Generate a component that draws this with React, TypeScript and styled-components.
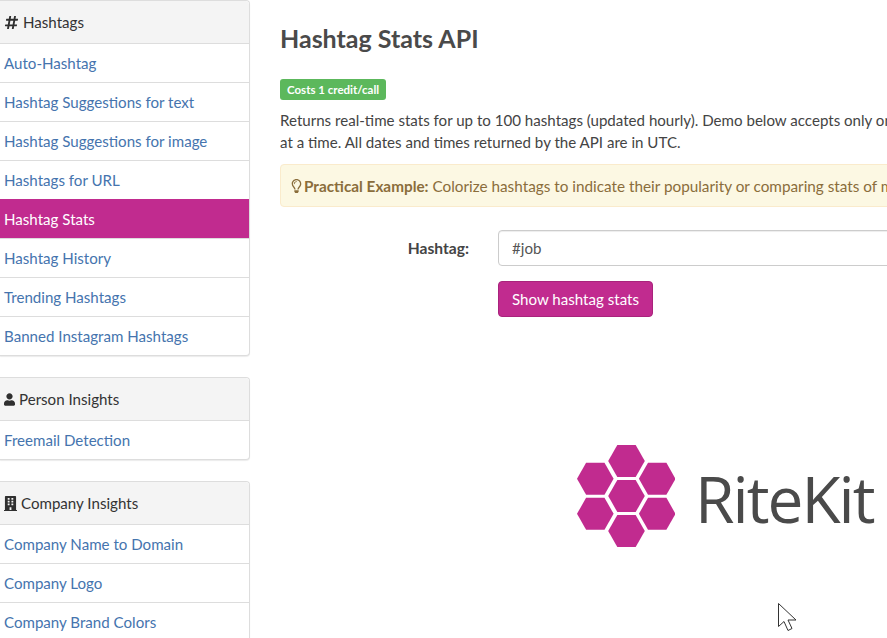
import React from 'react';
import styled, { createGlobalStyle } from 'styled-components';
import { FaHashtag, FaUser, FaBuilding, FaRegLightbulb } from 'react-icons/fa';

const brand = '#c12b8f';

const GlobalStyle = createGlobalStyle`
  html, body {
    margin: 0;
    padding: 0;
    background: #fff;
    overflow: hidden;
  }
  * { box-sizing: border-box; }
`;

const Page = styled.div`
  position: relative;
  display: flex;
  width: 887px;
  height: 638px;
  overflow: hidden;
  font-family: Lato, 'Open Sans', sans-serif;
  font-size: 15.1px;
  color: #444;
`;

const Sidebar = styled.aside`
  flex: none;
  width: 250px;
  display: flex;
  flex-direction: column;
  gap: 21px;
`;

const Panel = styled.section`
  flex: none;
  background: #fff;
  border: 1px solid #ddd;
  border-left: none;
  border-radius: 0 4px 4px 0;
  box-shadow: 0 1px 1px rgba(0, 0, 0, 0.08);
`;

const PanelHeader = styled.div`
  height: 42px;
  display: flex;
  align-items: center;
  gap: 4px;
  padding-left: 4px;
  background: #f4f4f4;
  border-radius: 0 4px 0 0;
  color: #333;
`;

const IconSlot = styled.span<{ $w: number }>`
  display: flex;
  width: ${({ $w }) => $w}px;
  color: #2f2f2f;
  svg { width: ${({ $w }) => $w}px; height: 15px; }
`;

const NavLink = styled.a<{ $active?: boolean }>`
  height: 39px;
  display: flex;
  align-items: center;
  padding-left: 4px;
  border-top: 1px solid ${({ $active }) => ($active ? brand : '#ddd')};
  background: ${({ $active }) => ($active ? brand : 'transparent')};
  color: ${({ $active }) => ($active ? '#fff' : '#4574ae')};
  text-decoration: none;
`;

const Main = styled.main`
  flex: none;
  width: 800px;
  padding: 23px 0 0 30px;
`;

const Title = styled.h1`
  margin: 0;
  font-size: 25px;
  line-height: 30px;
  font-weight: 700;
  color: #4a4a4a;
`;

const Badge = styled.span`
  display: inline-block;
  margin-top: 26px;
  height: 21px;
  padding: 0 7px;
  border-radius: 3px;
  background: #5cb85c;
  color: #fff;
  font-size: 11.5px;
  font-weight: 700;
  line-height: 21px;
`;

const Description = styled.p`
  margin: 9px 0 0;
  line-height: 22px;
  white-space: nowrap;
`;

const Alert = styled.div`
  margin-top: 11px;
  height: 43px;
  display: flex;
  align-items: center;
  gap: 2px;
  padding-left: 10px;
  background: #fcf8e3;
  border: 1px solid #faebcc;
  border-radius: 4px;
  color: #8a6d3b;
  font-size: 15.3px;
  white-space: nowrap;
  svg { width: 11px; height: 14px; }
`;

const FormRow = styled.div`
  margin-top: 23px;
  display: grid;
  grid-template-columns: 189px 1fr;
  column-gap: 29px;
  row-gap: 15px;
  align-items: center;
`;

const Label = styled.label`
  text-align: right;
  font-size: 15.6px;
  font-weight: 700;
  color: #444;
`;

const Input = styled.input`
  height: 36px;
  width: 100%;
  padding: 0 13px;
  border: 1px solid #ccc;
  border-radius: 4px;
  box-shadow: inset 0 1px 1px rgba(0, 0, 0, 0.075);
  font: inherit;
  color: #555;
  outline: none;
`;

const SubmitButton = styled.button`
  grid-column: 2;
  justify-self: start;
  height: 36px;
  width: 155px;
  padding: 0;
  background: ${brand};
  border: 1px solid #a9237c;
  border-radius: 4px;
  color: #fff;
  font: inherit;
`;

const Logo = styled.div`
  margin: 128px 0 0 297px;
  display: flex;
  align-items: flex-start;
  gap: 20px;
`;

const LogoText = styled.span`
  padding-top: 3px;
  font-family: 'Open Sans', sans-serif;
  font-size: 64px;
  font-weight: 500;
  line-height: 102px;
  color: #4a4a4a;
  letter-spacing: -2px;
`;

const Cursor = styled.svg`
  position: absolute;
  left: 777px;
  top: 602px;
`;

const hexCenters = [
  [49.5, 16],
  [18.3, 33.8],
  [80.2, 33.8],
  [49.5, 51],
  [18.3, 68.8],
  [80.2, 68.8],
  [49.5, 86],
];

const hexPoints = (cx: number, cy: number) =>
  [
    [cx - 18.3, cy],
    [cx - 9.2, cy - 16],
    [cx + 9.2, cy - 16],
    [cx + 18.3, cy],
    [cx + 9.2, cy + 16],
    [cx - 9.2, cy + 16],
  ]
    .map((p) => p.join(','))
    .join(' ');

const groups = [
  {
    title: 'Hashtags',
    icon: <FaHashtag />,
    iconWidth: 15,
    links: [
      'Auto-Hashtag',
      'Hashtag Suggestions for text',
      'Hashtag Suggestions for image',
      'Hashtags for URL',
      'Hashtag Stats',
      'Hashtag History',
      'Trending Hashtags',
      'Banned Instagram Hashtags',
    ],
  },
  { title: 'Person Insights', icon: <FaUser />, iconWidth: 11, links: ['Freemail Detection'] },
  {
    title: 'Company Insights',
    icon: <FaBuilding />,
    iconWidth: 13,
    links: ['Company Name to Domain', 'Company Logo', 'Company Brand Colors', 'Company Email'],
  },
];

export default function App() {
  return (
    <Page>
      <GlobalStyle />
      <Sidebar>
        {groups.map((g) => (
          <Panel key={g.title}>
            <PanelHeader>
              <IconSlot $w={g.iconWidth}>{g.icon}</IconSlot>
              {g.title}
            </PanelHeader>
            {g.links.map((l) => (
              <NavLink key={l} href="#" $active={l === 'Hashtag Stats'}>
                {l}
              </NavLink>
            ))}
          </Panel>
        ))}
      </Sidebar>
      <Main>
        <Title>Hashtag Stats API</Title>
        <Badge>Costs 1 credit/call</Badge>
        <Description>
          Returns real-time stats for up to 100 hashtags (updated hourly). Demo below accepts only one hashtag
          <br />
          at a time. All dates and times returned by the API are in UTC.
        </Description>
        <Alert>
          <FaRegLightbulb />
          <span>
            <b>Practical Example:</b> Colorize hashtags to indicate their popularity or comparing stats of multiple hashtags.
          </span>
        </Alert>
        <FormRow>
          <Label>Hashtag:</Label>
          <Input defaultValue="#job" />
          <SubmitButton type="button">Show hashtag stats</SubmitButton>
        </FormRow>
        <Logo>
          <svg width="98" height="102" viewBox="0 0 98 102">
            {hexCenters.map(([x, y]) => (
              <polygon key={`${x}-${y}`} points={hexPoints(x, y)} fill={brand} />
            ))}
          </svg>
          <LogoText>RiteKit</LogoText>
        </Logo>
      </Main>
      <Cursor width="22" height="32" viewBox="0 0 22 32">
        <path d="M1.5 1.5V24.5L7 19.5L11 28.5L15 26.5L11 18H19Z" fill="#fff" stroke="#333" strokeWidth="1" />
      </Cursor>
    </Page>
  );
}
